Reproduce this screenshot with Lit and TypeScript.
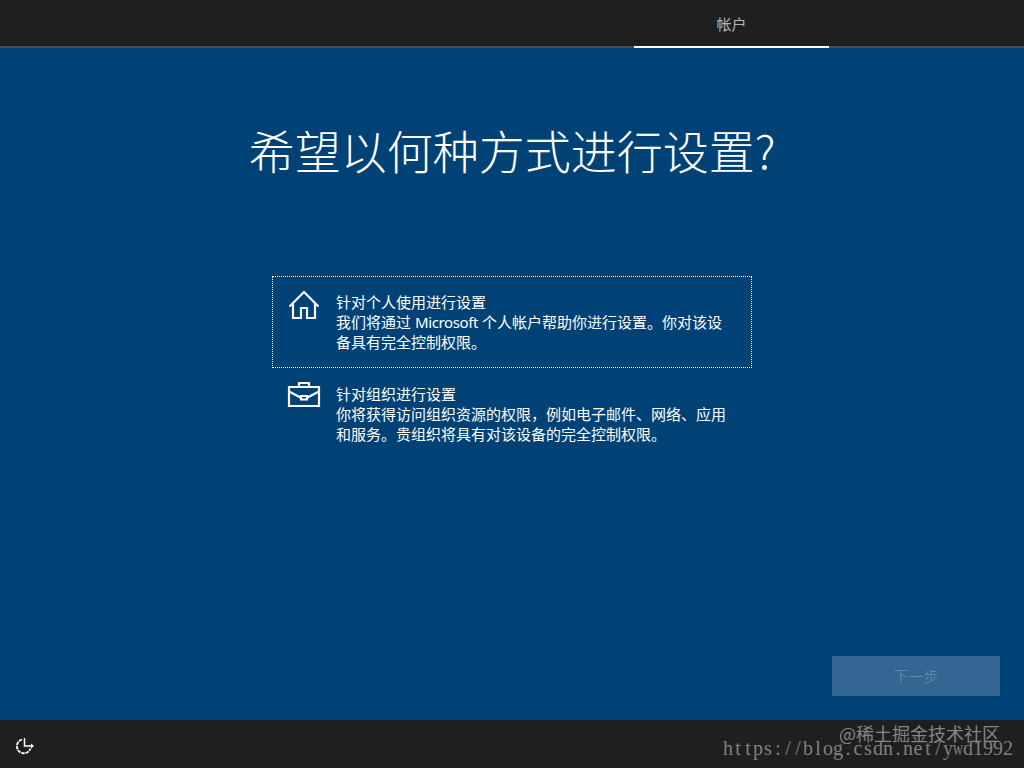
import { LitElement, html, css, svg } from "lit";
import { customElement } from "lit/decorators.js";
import { classMap } from "lit/directives/class-map.js";

const homeIcon = svg`<svg class="icon" viewBox="0 0 34 34" width="34" height="34" fill="none" stroke="#fff" stroke-width="2.200">
  <path d="M2.500 17.500 17 3 31.500 17.500"/>
  <path d="M6 14.500V29H14V19H20V29H28V14.500"/>
</svg>`;

const caseIcon = svg`<svg class="icon" viewBox="0 0 34 34" width="34" height="34" fill="none" stroke="#fff" stroke-width="2.200">
  <path d="M2 6H32V25H2Z"/>
  <path d="M12 6V2H22V6"/>
  <path d="M2 10.500 13.500 16.500M32 10.500 20.500 16.500M14 15H20V18.500H14Z"/>
</svg>`;

const choices = [
  {
    icon: homeIcon,
    title: "针对个人使用进行设置",
    lines: [
      html`我们将通过 <span class="latin">Microsoft</span> 个人帐户帮助你进行设置。你对该设`,
      "备具有完全控制权限。",
    ],
    selected: true,
  },
  {
    icon: caseIcon,
    title: "针对组织进行设置",
    lines: ["你将获得访问组织资源的权限，例如电子邮件、网络、应用", "和服务。贵组织将具有对该设备的完全控制权限。"],
    selected: false,
  },
];

@customElement("app-root")
export class AppRoot extends LitElement {
  static styles = css`
    :host {
      display: flex;
      flex-direction: column;
      position: relative;
      width: 1024px;
      height: 768px;
      overflow: hidden;
      background: #004275;
      color: #fff;
      font: 15px/20px "Noto Sans", "Noto Sans CJK SC", sans-serif;
    }
    * { box-sizing: border-box; }
    .top {
      height: 48px;
      flex: none;
      display: flex;
      padding-left: 634px;
      background: linear-gradient(#1f1f1f 46px, #4c4c4c 46px);
    }
    .tab {
      width: 195px;
      height: 48px;
      border-bottom: 2px solid #fff;
      color: #b4b4b4;
      font-family: "Noto Sans CJK SC", sans-serif;
      text-align: center;
      line-height: 48px;
    }
    main {
      flex: 1;
      display: flex;
      flex-direction: column;
      align-items: center;
    }
    h1 {
      margin: 67px 0 0;
      height: 68px;
      font: 300 46px/68px "Noto Sans CJK SC", sans-serif;
      white-space: nowrap;
    }
    .choices { width: 480px; margin-top: 93px; }
    .choice {
      display: flex;
      height: 92px;
      padding: 12px 0 0 14px;
      border: 1px solid transparent;
    }
    .selected { border: 1px dotted #fff; }
    .icon { flex: none; display: block; }
    .text { padding: 3px 0 0 15px; white-space: nowrap; }
    .text div { height: 20px; }
    .latin { letter-spacing: -0.36px; }
    .next {
      align-self: flex-end;
      margin: auto 24px 24px 0;
      width: 168px;
      height: 40px;
      border: 0;
      padding: 0;
      background: #336791;
      color: #6990b0;
      font: 300 15px/40px "Noto Sans CJK SC", sans-serif;
    }
    footer {
      height: 48px;
      flex: none;
      padding: 16px 0 0 14px;
      background: #1f1f1f;
    }
    .ease { display: block; }
    .site {
      position: absolute;
      right: 24px;
      top: 720px;
      font: 18px/26px "Noto Sans CJK SC", sans-serif;
      color: #858585;
      white-space: nowrap;
    }
    .url {
      position: absolute;
      left: 723px;
      top: 736px;
      display: flex;
      font: 20px/24px "Liberation Serif", serif;
      color: #808080;
    }
    .cell {
      width: 10px;
      display: flex;
      justify-content: center;
    }
    .wide { transform: scaleX(0.72); }
  `;

  render() {
    return html`
      <header class="top"><div class="tab">帐户</div></header>
      <main>
        <h1>希望以何种方式进行设置?</h1>
        <div class="choices">
          ${choices.map(
            (c) => html`<div class=${classMap({ choice: true, selected: c.selected })}>
              ${c.icon}
              <div class="text"><div>${c.title}</div>${c.lines.map((l) => html`<div>${l}</div>`)}</div>
            </div>`
          )}
        </div>
        <button class="next" disabled>下一步</button>
      </main>
      <footer>
        <svg class="ease" width="22" height="20" viewBox="0 0 22 20" fill="none" stroke="#fff" stroke-width="1.500">
          <path d="M10.500 2V10H18"/>
          <path d="M17 7.500 20 10 17 12.500Z" fill="#fff" stroke="none"/>
          <path d="M8 3.500A7 7 0 1 0 16.500 12.500" stroke-width="1.800" stroke-dasharray="3.500 .8"/>
        </svg>
      </footer>
      <div class="url">${[..."https://blog.csdn.net/ywd1992"].map(
        (ch) => html`<span class=${classMap({ cell: true, wide: ch === "w" })}>${ch}</span>`
      )}</div>
      <div class="site">@稀土掘金技术社区</div>
    `;
  }
}
